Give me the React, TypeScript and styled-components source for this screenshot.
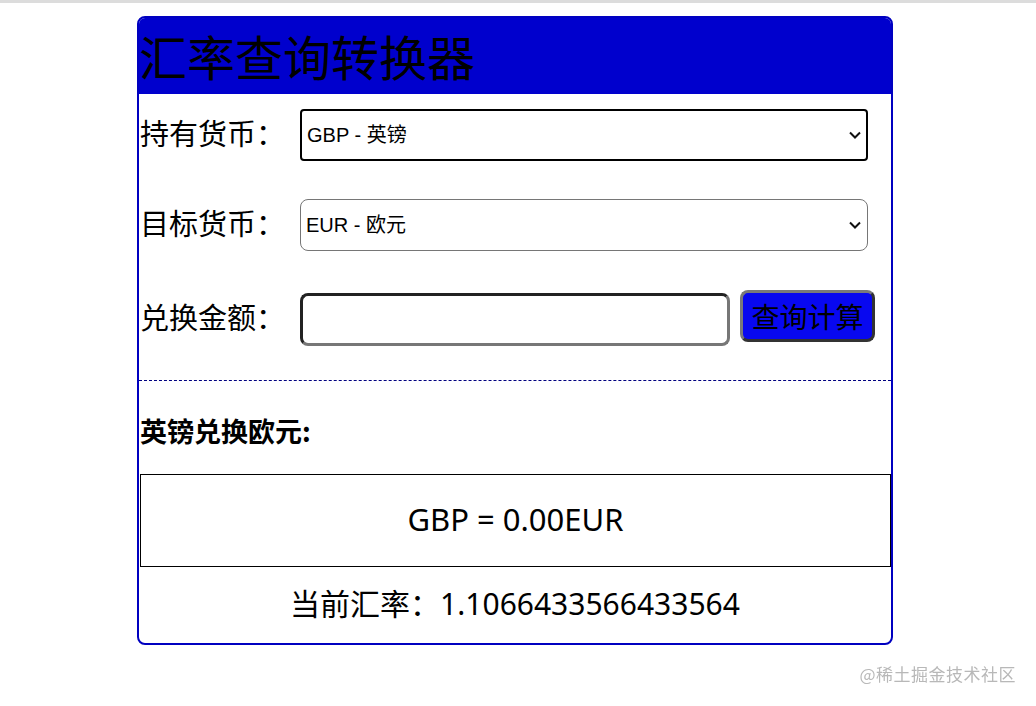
import styled, { createGlobalStyle } from "styled-components";

const GlobalStyle = createGlobalStyle`
  html, body {
    margin: 0;
    padding: 0;
    background: #fff;
  }
  body {
    border-top: 3px solid #dcdcdc;
    font-family: "Noto Sans CJK SC", "Noto Sans", sans-serif;
    color: #000;
  }
`;

const Card = styled.div`
  box-sizing: border-box;
  width: 756px;
  margin: 13px 0 0 137px;
  border: 2px solid #0000c0;
  border-radius: 8px;
  overflow: hidden;
  background: #fff;
`;

const Header = styled.h1`
  margin: 0;
  height: 76px;
  background: #0000cd;
  font-size: 48px;
  font-weight: normal;
  line-height: 74px;
  white-space: nowrap;
`;

const Form = styled.div`
  padding-top: 15px;
`;

const Row = styled.div<{ $gap: number }>`
  display: flex;
  align-items: center;
  margin-bottom: ${(p) => p.$gap}px;
`;

const Label = styled.label`
  flex: 0 0 161px;
  font-size: 29px;
  line-height: 40px;
  padding-left: 1px;
  margin-top: -6px;
  box-sizing: border-box;
  white-space: nowrap;
`;

const SelectWrap = styled.div`
  position: relative;
  width: 568px;
`;

const Select = styled.select<{ $focused?: boolean }>`
  appearance: none;
  box-sizing: border-box;
  width: 100%;
  height: 52px;
  padding: 0 30px 0 5px;
  font-family: "Liberation Sans", "Noto Sans CJK SC", sans-serif;
  font-size: 20px;
  color: #000;
  background: #fff;
  border: ${(p) => (p.$focused ? "2px solid #000" : "1px solid #767676")};
  border-radius: ${(p) => (p.$focused ? "4px" : "8px")};
  outline: none;
`;

const Chevron = styled.svg`
  position: absolute;
  right: 6px;
  top: 50%;
  transform: translateY(-50%);
  pointer-events: none;
`;

const AmountRow = styled.div`
  display: flex;
  align-items: flex-start;
  margin-bottom: 34px;
`;

const AmountLabel = styled(Label)`
  margin-top: 6px;
`;

const Input = styled.input`
  box-sizing: border-box;
  width: 430px;
  height: 53px;
  margin-top: 3px;
  border: 3px solid;
  border-color: #222 #777 #777 #222;
  border-radius: 8px;
  font-size: 20px;
  padding: 0 8px;
  outline: none;
`;

const QueryButton = styled.button`
  box-sizing: border-box;
  width: 135px;
  height: 52px;
  margin-left: 10px;
  background: #0808f0;
  border: 3px solid;
  border-color: #7a7a7a #333 #333 #7a7a7a;
  border-radius: 8px;
  font-family: "Noto Sans CJK SC", sans-serif;
  font-size: 28px;
  line-height: 1;
  color: #000;
  padding: 0;
`;

const Divider = styled.hr`
  margin: 0;
  border: none;
  border-top: 1px dashed #000080;
`;

const ResultTitle = styled.h3`
  margin: 32px 0 25px 1px;
  font-size: 27px;
  line-height: 36px;
  font-weight: bold;
`;

const ResultBox = styled.div`
  box-sizing: border-box;
  height: 93px;
  margin: 0 0 0 1px;
  border: 1px solid #000;
  display: flex;
  align-items: center;
  justify-content: center;
  font-family: "Noto Sans", "Noto Sans CJK SC", sans-serif;
  font-size: 31px;
  padding-bottom: 4px;
`;

const RateLine = styled.div`
  text-align: center;
  font-family: "Noto Sans", "Noto Sans CJK SC", sans-serif;
  font-size: 30px;
  line-height: 40px;
  padding: 17px 0 19px;
`;

const Watermark = styled.div`
  position: fixed;
  right: 20px;
  bottom: 20px;
  font-size: 17px;
  color: #b8b8b8;
  letter-spacing: 0.5px;
`;

const ChevronIcon = () => (
  <Chevron width="14" height="14" viewBox="0 0 14 14">
    <path d="M2 4.5 L7 9.5 L12 4.5" fill="none" stroke="#111" strokeWidth="2" />
  </Chevron>
);

const App = () => {
  return (
    <>
      <GlobalStyle />
      <Card>
        <Header>汇率查询转换器</Header>
        <Form>
          <Row $gap={38}>
            <Label>持有货币：</Label>
            <SelectWrap>
              <Select $focused defaultValue="GBP">
                <option value="GBP">GBP - 英镑</option>
              </Select>
              <ChevronIcon />
            </SelectWrap>
          </Row>
          <Row $gap={39}>
            <Label>目标货币：</Label>
            <SelectWrap>
              <Select defaultValue="EUR">
                <option value="EUR">EUR - 欧元</option>
              </Select>
              <ChevronIcon />
            </SelectWrap>
          </Row>
          <AmountRow>
            <AmountLabel>兑换金额：</AmountLabel>
            <Input type="text" />
            <QueryButton>查询计算</QueryButton>
          </AmountRow>
        </Form>
        <Divider />
        <ResultTitle>英镑兑换欧元:</ResultTitle>
        <ResultBox>GBP = 0.00EUR</ResultBox>
        <RateLine>当前汇率：1.1066433566433564</RateLine>
      </Card>
      <Watermark>@稀土掘金技术社区</Watermark>
    </>
  );
};

export default App;
